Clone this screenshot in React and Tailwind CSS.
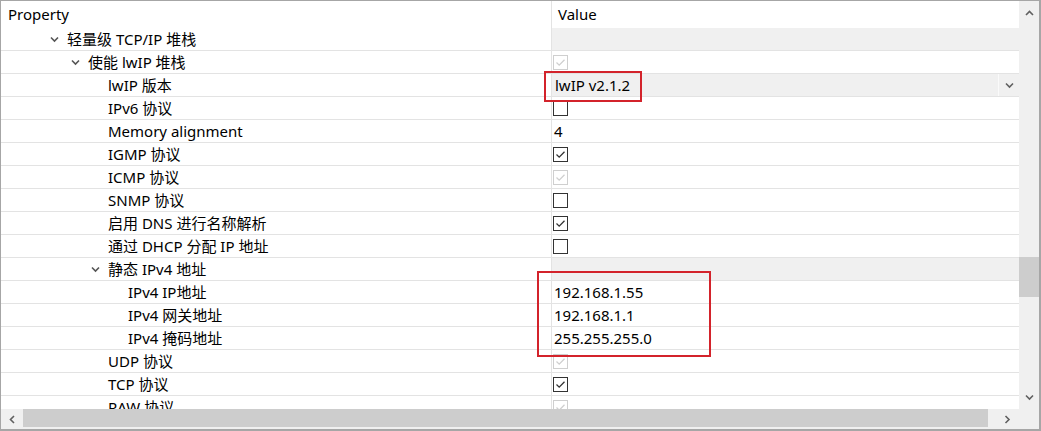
import React from 'react';

const font = { fontFamily: '"Noto Sans", "Noto Sans CJK SC", sans-serif' };

const rows = [
    { label: '轻量级 TCP/IP 堆栈', level: 1, expand: true, value: { type: 'section' } },
    { label: '使能 lwIP 堆栈', level: 2, expand: true, value: { type: 'check', checked: true, disabled: true } },
    { label: 'lwIP 版本', level: 3, value: { type: 'select', text: 'lwIP v2.1.2' } },
    { label: 'IPv6 协议', level: 3, value: { type: 'check', checked: false } },
    { label: 'Memory alignment', level: 3, value: { type: 'text', text: '4' } },
    { label: 'IGMP 协议', level: 3, value: { type: 'check', checked: true } },
    { label: 'ICMP 协议', level: 3, value: { type: 'check', checked: true, disabled: true } },
    { label: 'SNMP 协议', level: 3, value: { type: 'check', checked: false } },
    { label: '启用 DNS 进行名称解析', level: 3, value: { type: 'check', checked: true } },
    { label: '通过 DHCP 分配 IP 地址', level: 3, value: { type: 'check', checked: false } },
    { label: '静态 IPv4 地址', level: 3, expand: true, value: { type: 'section' } },
    { label: 'IPv4 IP地址', level: 4, value: { type: 'text', text: '192.168.1.55' } },
    { label: 'IPv4 网关地址', level: 4, value: { type: 'text', text: '192.168.1.1' } },
    { label: 'IPv4 掩码地址', level: 4, value: { type: 'text', text: '255.255.255.0' } },
    { label: 'UDP 协议', level: 3, value: { type: 'check', checked: true, disabled: true } },
    { label: 'TCP 协议', level: 3, value: { type: 'check', checked: true } },
    { label: 'RAW 协议', level: 3, value: { type: 'check', checked: true, disabled: true } },
];

// left padding so the text starts 17px after the chevron slot
const indent = {
    1: 'pl-[49px]',
    2: 'pl-[70px]',
    3: 'pl-[90px]',
    4: 'pl-[110px]',
};

const Chevron = ({ dir = 'down', color = '#555' }) => {
    const pts = {
        down: '1,1.5 4.5,5 8,1.5',
        up: '1,5 4.5,1.5 8,5',
        left: '5,1 1.5,4.5 5,8',
        right: '1.5,1 5,4.5 1.5,8',
    }[dir];
    const horiz = dir === 'left' || dir === 'right';
    return (
        <svg width={horiz ? 7 : 9} height={horiz ? 9 : 7} viewBox={horiz ? '0 0 7 9' : '0 0 9 7'} className="block">
            <polyline points={pts} fill="none" stroke={color} strokeWidth="1.6" />
        </svg>
    );
};

const Checkbox = ({ checked, disabled }) => (
    <div className={`w-[15px] h-[15px] border flex items-center justify-center bg-white ${disabled ? 'border-[#cfcfcf]' : 'border-[#333]'}`}>
        {checked && (
            <svg width="13" height="13" viewBox="0 0 13 13">
                <polyline points="2.5,6.5 5.2,9.2 10.5,3.8" fill="none" stroke={disabled ? '#cfcfcf' : '#333'} strokeWidth="1.3" />
            </svg>
        )}
    </div>
);

const ValueCell = ({ value }) => {
    if (value.type === 'section') {
        return <div className="flex-1 h-full bg-[#f0f0f0]" />;
    }
    if (value.type === 'select') {
        return (
            <div className="flex-1 h-full bg-[#f0f0f0] flex items-center">
                <span className="flex-1 pl-[3px] text-[15px] text-black">{value.text}</span>
                <div className="w-[21px] h-full border-l border-[#fafafa] flex items-center justify-center">
                    <Chevron dir="down" color="#606060" />
                </div>
            </div>
        );
    }
    if (value.type === 'check') {
        return (
            <div className="flex-1 h-full flex items-center pl-[1px]">
                <Checkbox checked={value.checked} disabled={value.disabled} />
            </div>
        );
    }
    return (
        <div className="flex-1 h-full flex items-center pl-[2px] text-[15px] text-black">{value.text}</div>
    );
};

const App = () => {
    return (
        <div
            className="relative w-[1041px] h-[431px] bg-white border-t border-l border-r-2 border-b-2 border-[#a6a6a6] flex flex-col overflow-hidden"
            style={font}
        >
            <div className="flex h-[408px]">
                {/* Grid */}
                <div className="w-[1018px] h-full overflow-hidden">
                    <div className="flex h-[27px]">
                        <div className="w-[550px] flex items-center pl-[7px] text-[15px] text-black">Property</div>
                        <div className="flex-1 flex items-center pl-[6px] border-l border-[#e3e3e3] text-[15px] text-black">Value</div>
                    </div>
                    {rows.map((row, i) => (
                        <div key={i} className="flex h-[23px] border-b border-[#e3e3e3]">
                            <div className={`w-[550px] flex items-center ${indent[row.level]}`}>
                                <div className="w-[17px] flex items-center">
                                    {row.expand && <Chevron dir="down" color="#555" />}
                                </div>
                                <span className="text-[15px] text-black whitespace-nowrap">{row.label}</span>
                            </div>
                            <div className="flex-1 flex border-l border-[#e3e3e3]">
                                <ValueCell value={row.value} />
                            </div>
                        </div>
                    ))}
                </div>
                {/* Vertical scrollbar */}
                <div className="w-[20px] h-full bg-[#f0f0f0] flex flex-col">
                    <div className="h-[24px] flex items-center justify-center">
                        <Chevron dir="up" color="#606060" />
                    </div>
                    <div className="flex-1">
                        <div className="mt-[232px] h-[40px] bg-[#cdcdcd]" />
                    </div>
                    <div className="h-[24px] flex items-center justify-center">
                        <Chevron dir="down" color="#606060" />
                    </div>
                </div>
            </div>
            {/* Horizontal scrollbar */}
            <div className="flex h-[20px] bg-[#f0f0f0]">
                <div className="w-[22px] flex items-center justify-center">
                    <Chevron dir="left" color="#606060" />
                </div>
                <div className="w-[965px] h-[18px] bg-[#cdcdcd]" />
                <div className="flex-1" />
                <div className="w-[23px] flex items-center justify-center">
                    <Chevron dir="right" color="#606060" />
                </div>
                <div className="w-[20px]" />
            </div>

            {/* Annotation boxes */}
            <div className="absolute left-[543px] top-[70px] w-[98px] h-[31px] border-2 border-[#d3232b]" />
            <div className="absolute left-[536px] top-[270px] w-[174px] h-[86px] border-2 border-[#d3232b]" />
        </div>
    );
};

export default App;
